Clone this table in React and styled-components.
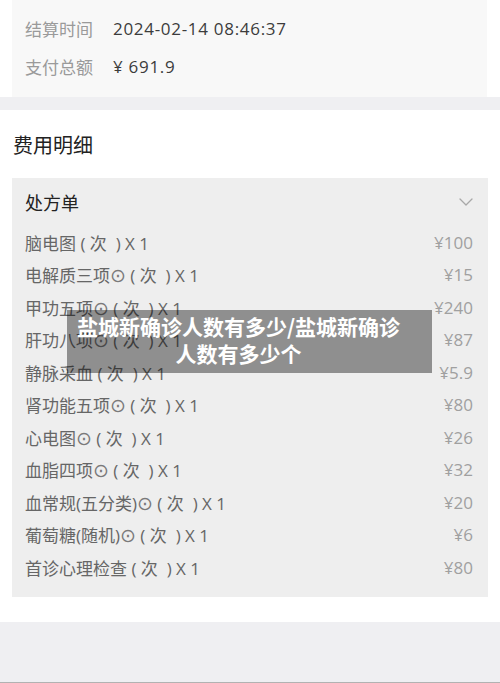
import React from "react";
import styled, { createGlobalStyle } from "styled-components";

const Global = createGlobalStyle`
  html, body { margin: 0; padding: 0; background: #ffffff; }
  body { font-family: "Open Sans", "Noto Sans CJK SC", sans-serif; }
`;

const Page = styled.div`
  position: relative;
  width: 500px;
  height: 683px;
  overflow: hidden;
  background: #ffffff;
`;

const InfoCard = styled.div`
  margin: 0 13px 0 12px;
  height: 97px;
  box-sizing: border-box;
  padding: 9px 13px 0;
  background: #f8f8f8;
`;

const InfoRow = styled.div`
  display: flex;
  height: 38px;
  align-items: center;
  font-size: 17px;
`;

const InfoLabel = styled.span`
  width: 88px;
  color: #9a9a9a;
`;

const InfoValue = styled.span`
  color: #3c3c3c;
  letter-spacing: 0.7px;
`;

const Band = styled.div`
  height: ${(p) => p.$h}px;
  background: #efeff2;
  border-bottom: ${(p) => (p.$line ? "1px solid #b2b2b2" : "none")};
`;

const Section = styled.div`
  height: 512px;
  box-sizing: border-box;
  padding: 0 12px;
`;

const SectionTitle = styled.div`
  height: 68px;
  display: flex;
  align-items: center;
  padding-left: 1px;
  font-size: 20px;
  color: #222222;
`;

const Box = styled.div`
  background: #eeeeee;
  padding: 0 15px 14px 13px;
  height: 419px;
  box-sizing: border-box;
`;

const BoxHeader = styled.div`
  height: 48px;
  display: flex;
  align-items: center;
  justify-content: space-between;
  font-size: 18px;
  color: #222222;
`;

const ItemRow = styled.div`
  display: flex;
  justify-content: space-between;
  align-items: center;
  height: 32.5px;
  font-size: 17px;
`;

const ItemName = styled.span`
  color: #666666;
  white-space: pre;
`;

const Dot = styled.span`
  font-family: "DejaVu Sans", sans-serif;
  font-size: 19px;
  line-height: 1;
  color: #7a7a7a;
`;

const ItemPrice = styled.span`
  color: #a0a0a0;
`;

const Overlay = styled.div`
  position: absolute;
  left: 67px;
  top: 310px;
  width: 365px;
  height: 63px;
  box-sizing: border-box;
  padding: 3px 30px 0 8px;
  background: rgba(0, 0, 0, 0.4);
  color: #ffffff;
  font-family: "Noto Sans CJK SC", sans-serif;
  font-weight: 700;
  font-size: 21px;
  line-height: 27px;
  text-align: center;
`;

const items = [
  ["脑电图", false, "¥100"],
  ["电解质三项", true, "¥15"],
  ["甲功五项", true, "¥240"],
  ["肝功八项", true, "¥87"],
  ["静脉采血", false, "¥5.9"],
  ["肾功能五项", true, "¥80"],
  ["心电图", true, "¥26"],
  ["血脂四项", true, "¥32"],
  ["血常规(五分类)", true, "¥20"],
  ["葡萄糖(随机)", true, "¥6"],
  ["首诊心理检查", false, "¥80"],
];

const Chevron = () => (
  <svg width="14" height="8" viewBox="0 0 14 8" fill="none">
    <path d="M1 1 L7 7 L13 1" stroke="#a8a8a8" strokeWidth="1.3" strokeLinecap="round" strokeLinejoin="round" />
  </svg>
);

export default function App() {
  return (
    <Page>
      <Global />
      <InfoCard>
        <InfoRow>
          <InfoLabel>结算时间</InfoLabel>
          <InfoValue>2024-02-14 08:46:37</InfoValue>
        </InfoRow>
        <InfoRow>
          <InfoLabel>支付总额</InfoLabel>
          <InfoValue>¥ 691.9</InfoValue>
        </InfoRow>
      </InfoCard>
      <Band $h={13} />
      <Section>
        <SectionTitle>费用明细</SectionTitle>
        <Box>
          <BoxHeader>
            <span>处方单</span>
            <Chevron />
          </BoxHeader>
          {items.map(([name, dot, price]) => (
            <ItemRow key={name}>
              <ItemName>
                {name}
                {dot && <Dot>⊙</Dot>}
                {" ( 次  ) X 1"}
              </ItemName>
              <ItemPrice>{price}</ItemPrice>
            </ItemRow>
          ))}
        </Box>
      </Section>
      <Band $h={60} $line />
      <Overlay>盐城新确诊人数有多少/盐城新确诊人数有多少个</Overlay>
    </Page>
  );
}
